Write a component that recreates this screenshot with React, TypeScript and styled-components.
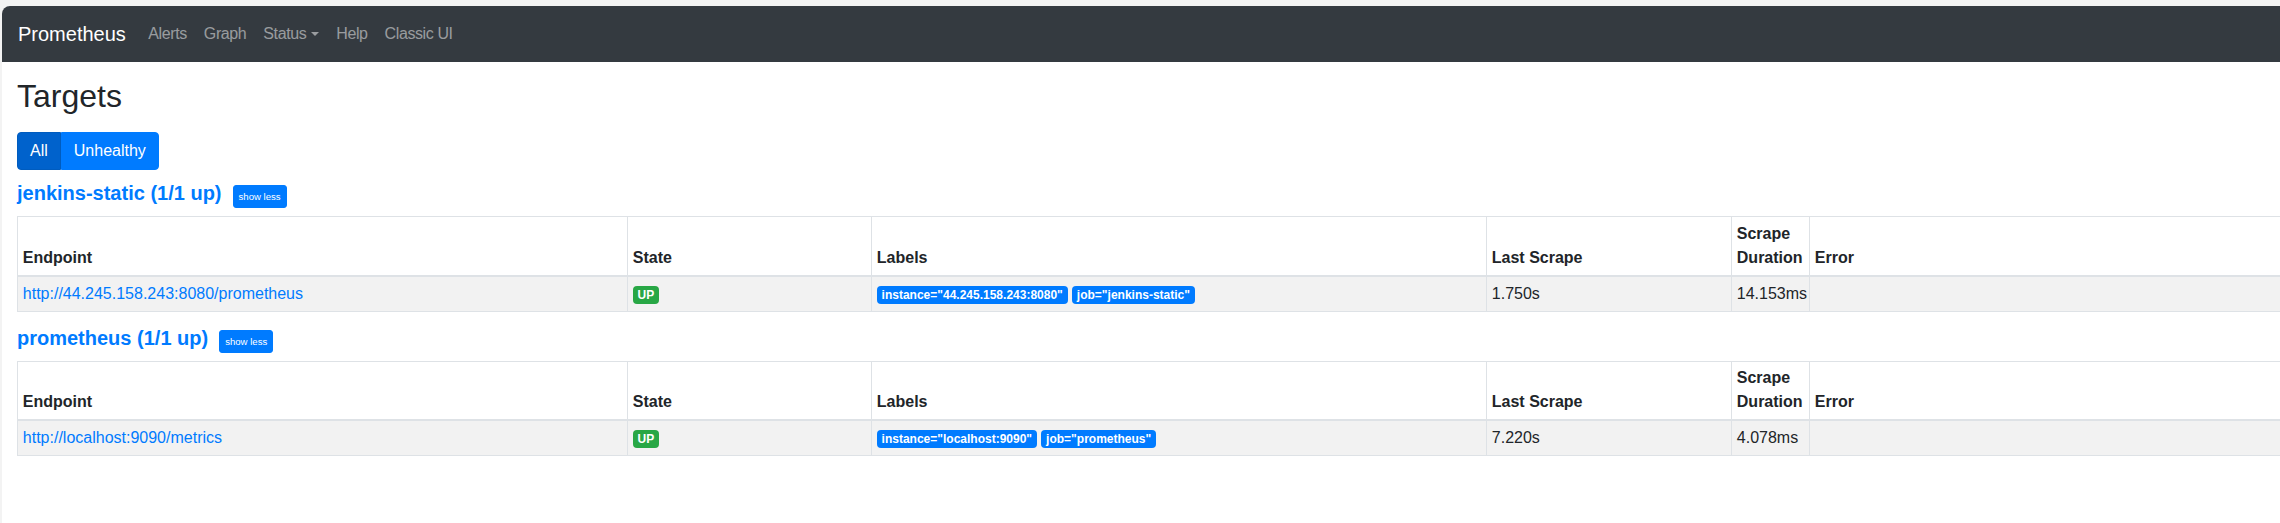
import React from 'react';
import styled, { createGlobalStyle } from 'styled-components';

const GlobalStyle = createGlobalStyle`
  html, body {
    margin: 0;
    padding: 0;
    overflow: hidden;
    background: #f3f3f3;
    font-family: "Liberation Sans", Arial, sans-serif;
    color: #212529;
  }
`;

type Label = { name: string; value: string };
type Target = {
  endpoint: string;
  state: string;
  labels: Label[];
  lastScrape: string;
  duration: string;
  error: string;
};
type Pool = { name: string; up: number; total: number; targets: Target[] };

const pools: Pool[] = [
  {
    name: 'jenkins-static',
    up: 1,
    total: 1,
    targets: [
      {
        endpoint: 'http://44.245.158.243:8080/prometheus',
        state: 'UP',
        labels: [
          { name: 'instance', value: '44.245.158.243:8080' },
          { name: 'job', value: 'jenkins-static' },
        ],
        lastScrape: '1.750s',
        duration: '14.153ms',
        error: '',
      },
    ],
  },
  {
    name: 'prometheus',
    up: 1,
    total: 1,
    targets: [
      {
        endpoint: 'http://localhost:9090/metrics',
        state: 'UP',
        labels: [
          { name: 'instance', value: 'localhost:9090' },
          { name: 'job', value: 'prometheus' },
        ],
        lastScrape: '7.220s',
        duration: '4.078ms',
        error: '',
      },
    ],
  },
];

const Window = styled.div`
  margin: 6px 0 0 2px;
  min-height: 517px;
  background: #fff;
  border-top-left-radius: 8px;
  overflow: hidden;
`;

const Navbar = styled.nav`
  display: flex;
  align-items: center;
  height: 56px;
  box-sizing: border-box;
  padding: 8px 16px;
  background: #343a40;
`;

const Brand = styled.a`
  color: #fff;
  font-size: 20px;
  line-height: 30px;
  padding: 5px 0;
  margin-right: 14px;
  text-decoration: none;
`;

const NavLink = styled.a<{ $dropdown?: boolean }>`
  color: rgba(255, 255, 255, 0.5);
  font-size: 16px;
  line-height: 24px;
  letter-spacing: -0.4px;
  padding: 8px 8.5px;
  text-decoration: none;
  white-space: nowrap;

  ${(p) =>
    p.$dropdown &&
    `
    &::after {
      content: '';
      display: inline-block;
      margin-left: 5px;
      vertical-align: 3px;
      border-top: 4px solid;
      border-right: 4px solid transparent;
      border-left: 4px solid transparent;
    }
  `}
`;

const Container = styled.main`
  padding: 15px 15px 0;
`;

const PageTitle = styled.h2`
  margin: 0 0 17px;
  font-size: 32px;
  font-weight: 500;
  line-height: 1.2;
`;

const Filter = styled.div`
  display: flex;
  width: max-content;
`;

const FilterButton = styled.button<{ $active?: boolean }>`
  font-family: inherit;
  font-size: 16px;
  line-height: 24px;
  padding: 6px 12px;
  color: #fff;
  background: ${(p) => (p.$active ? '#0062cc' : '#007bff')};
  border: 1px solid ${(p) => (p.$active ? '#005cbf' : '#007bff')};
  cursor: pointer;

  &:first-child {
    border-radius: 4px 0 0 4px;
  }
  &:last-child {
    border-radius: 0 4px 4px 0;
  }
`;

const PoolSection = styled.section`
  margin-top: 11px;

  & + & {
    margin-top: 14px;
  }
`;

const PoolTitle = styled.h3`
  margin: 0 0 8px;
  font-size: 20px;
  font-weight: 700;
  line-height: 24px;
`;

const PoolLink = styled.a`
  color: #007bff;
  text-decoration: none;
`;

const ShowLess = styled.button`
  display: inline-block;
  margin-left: 11px;
  font-family: inherit;
  font-size: 9.6px;
  font-weight: 400;
  line-height: 13px;
  padding: 4px 5px;
  color: #fff;
  background: #007bff;
  border: 1px solid #007bff;
  border-radius: 3px;
  vertical-align: baseline;
`;

const Table = styled.table`
  width: 2440px;
  table-layout: fixed;
  border-collapse: collapse;
  font-size: 16px;
  line-height: 24px;
  margin: 0;
`;

const Th = styled.th`
  text-align: left;
  vertical-align: bottom;
  padding: 4.8px;
  border: 1px solid #dee2e6;
  border-bottom-width: 2px;
  font-weight: 700;
`;

const Row = styled.tr`
  &:nth-of-type(odd) {
    background: rgba(0, 0, 0, 0.05);
  }
`;

const Td = styled.td`
  vertical-align: top;
  padding: 4.8px;
  border: 1px solid #dee2e6;
  white-space: nowrap;
`;

const EndpointLink = styled.a`
  color: #007bff;
  text-decoration: none;
`;

const Badge = styled.span<{ $tone: 'success' | 'primary' }>`
  display: inline-block;
  padding: 3px 4.8px;
  font-size: 12px;
  font-weight: 700;
  line-height: 1;
  color: #fff;
  white-space: nowrap;
  vertical-align: baseline;
  border-radius: 4px;
  background: ${(p) => (p.$tone === 'success' ? '#28a745' : '#007bff')};
`;

function PoolPanel({ pool }: { pool: Pool }) {
  return (
    <PoolSection>
      <PoolTitle>
        <PoolLink href={`#pool-${pool.name}`}>
          {pool.name} ({pool.up}/{pool.total} up)
        </PoolLink>
        <ShowLess>show less</ShowLess>
      </PoolTitle>
      <Table>
        <colgroup>
          <col style={{ width: 610 }} />
          <col style={{ width: 244 }} />
          <col style={{ width: 615 }} />
          <col style={{ width: 245 }} />
          <col style={{ width: 78 }} />
          <col />
        </colgroup>
        <thead>
          <tr>
            <Th>Endpoint</Th>
            <Th>State</Th>
            <Th>Labels</Th>
            <Th>Last Scrape</Th>
            <Th>Scrape Duration</Th>
            <Th>Error</Th>
          </tr>
        </thead>
        <tbody>
          {pool.targets.map((t) => (
            <Row key={t.endpoint}>
              <Td>
                <EndpointLink href={t.endpoint}>{t.endpoint}</EndpointLink>
              </Td>
              <Td>
                <Badge $tone="success">{t.state}</Badge>
              </Td>
              <Td>
                {t.labels.map((l, i) => (
                  <React.Fragment key={l.name}>
                    {i > 0 && ' '}
                    <Badge $tone="primary">
                      {l.name}="{l.value}"
                    </Badge>
                  </React.Fragment>
                ))}
              </Td>
              <Td>{t.lastScrape}</Td>
              <Td>{t.duration}</Td>
              <Td>{t.error}</Td>
            </Row>
          ))}
        </tbody>
      </Table>
    </PoolSection>
  );
}

export default function App() {
  return (
    <>
      <GlobalStyle />
      <Window>
        <Navbar>
          <Brand href="#">Prometheus</Brand>
          <NavLink href="#">Alerts</NavLink>
          <NavLink href="#">Graph</NavLink>
          <NavLink href="#" $dropdown>
            Status
          </NavLink>
          <NavLink href="#">Help</NavLink>
          <NavLink href="#">Classic UI</NavLink>
        </Navbar>
        <Container>
          <PageTitle>Targets</PageTitle>
          <Filter>
            <FilterButton $active>All</FilterButton>
            <FilterButton>Unhealthy</FilterButton>
          </Filter>
          {pools.map((p) => (
            <PoolPanel key={p.name} pool={p} />
          ))}
        </Container>
      </Window>
    </>
  );
}
